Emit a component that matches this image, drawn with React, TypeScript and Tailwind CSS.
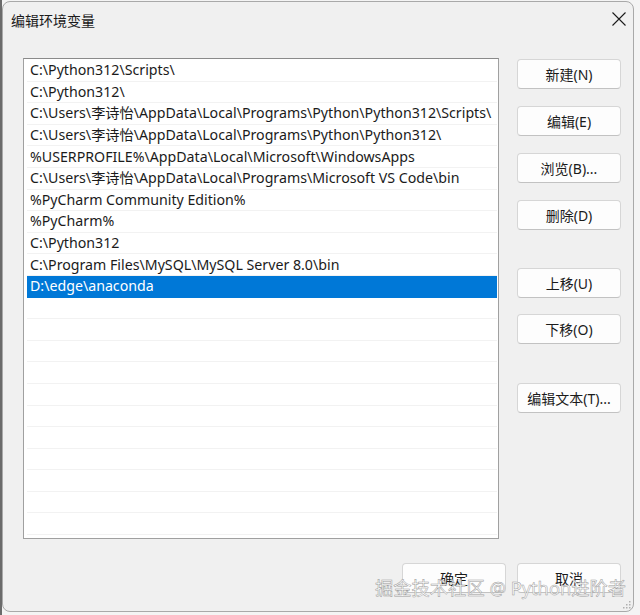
import React from 'react';

const paths = [
  'C:\\Python312\\Scripts\\',
  'C:\\Python312\\',
  'C:\\Users\\李诗怡\\AppData\\Local\\Programs\\Python\\Python312\\Scripts\\',
  'C:\\Users\\李诗怡\\AppData\\Local\\Programs\\Python\\Python312\\',
  '%USERPROFILE%\\AppData\\Local\\Microsoft\\WindowsApps',
  'C:\\Users\\李诗怡\\AppData\\Local\\Programs\\Microsoft VS Code\\bin',
  '%PyCharm Community Edition%',
  '%PyCharm%',
  'C:\\Python312',
  'C:\\Program Files\\MySQL\\MySQL Server 8.0\\bin',
  'D:\\edge\\anaconda',
];

const SELECTED = 10;
const TOTAL_ROWS = 22;

// Win11 style push button
const Btn = ({ label, className = '' }: { label: string; className?: string }) => (
  <button
    className={`w-[104px] h-[30px] shrink-0 rounded-[4px] border border-[#d6d6d6] border-b-[#c2c2c2] bg-[#fdfdfd] text-[14px] text-[#1b1b1b] flex items-center justify-center ${className}`}
  >
    {label}
  </button>
);

export default function App() {
  const rows = Array.from({ length: TOTAL_ROWS }, (_, i) => paths[i] ?? '');

  return (
    <div
      className="w-[640px] h-[615px] bg-[#f4f4f4] border-l-2 border-l-[#6b6b6b] overflow-hidden"
      style={{ fontFamily: '"Noto Sans", "Noto Sans CJK SC", sans-serif' }}
    >
      <div className="relative mt-[1px] w-[632px] h-[611px] rounded-lg border border-[#a9a9a9] bg-[#f0f0f0] flex flex-col">
        {/* title bar */}
        <div className="h-[36px] flex items-center justify-between pl-[8px]">
          <span className="text-[14px] text-[#1b1b1b]">编辑环境变量</span>
          <svg width="24" height="24" viewBox="0 0 24 24" className="mr-[2px] mb-[3px]">
            <path d="M5.5 5.5 L18.5 18.5 M18.5 5.5 L5.5 18.5" stroke="#1b1b1b" strokeWidth="1.1" />
          </svg>
        </div>

        <div className="flex pl-[20px] pt-[20px] gap-[18px]">
          {/* path list */}
          <div className="w-[476px] h-[481px] shrink-0 border border-[#a0a0a0] border-t-[#8a8a8a] bg-white pt-[1px] pl-[3px] pr-[1px] overflow-hidden">
            {rows.map((p, i) => (
              <div
                key={i}
                className={`h-[21.6px] pl-[3px] flex items-center whitespace-nowrap text-[14.2px] leading-none border-b border-[#f2f2f2] ${
                  i === SELECTED ? 'bg-[#0078d7] text-white border-b-[#0078d7]' : 'text-[#1b1b1b]'
                }`}
              >
                {p}
              </div>
            ))}
          </div>

          {/* action buttons */}
          <div className="flex flex-col pt-[1px]">
            <Btn label="新建(N)" />
            <Btn label="编辑(E)" className="mt-[17px]" />
            <Btn label="浏览(B)..." className="mt-[17px]" />
            <Btn label="删除(D)" className="mt-[17px]" />
            <Btn label="上移(U)" className="mt-[38px]" />
            <Btn label="下移(O)" className="mt-[16px]" />
            <Btn label="编辑文本(T)..." className="mt-[39px]" />
          </div>
        </div>

        {/* OK / Cancel */}
        <div className="flex justify-end gap-[11px] pr-[12px] pt-[24px]">
          <Btn label="确定" />
          <Btn label="取消" />
        </div>

        {/* watermark overlay */}
        <div className="absolute left-[372px] top-[577px] text-[18.3px] leading-none whitespace-nowrap text-white/90 [-webkit-text-stroke:0.5px_#9a9a9a]">
          掘金技术社区 @ Python进阶者
        </div>

        {/* resize grip */}
        <svg width="10" height="10" viewBox="0 0 10 10" className="absolute right-[1px] bottom-[1px]">
          <rect x="7" y="1" width="1.5" height="1.5" fill="#b0b0b0" />
          <rect x="4" y="4" width="1.5" height="1.5" fill="#b0b0b0" />
          <rect x="7" y="4" width="1.5" height="1.5" fill="#b0b0b0" />
          <rect x="1" y="7" width="1.5" height="1.5" fill="#b0b0b0" />
          <rect x="4" y="7" width="1.5" height="1.5" fill="#b0b0b0" />
          <rect x="7" y="7" width="1.5" height="1.5" fill="#b0b0b0" />
        </svg>
      </div>
    </div>
  );
}
